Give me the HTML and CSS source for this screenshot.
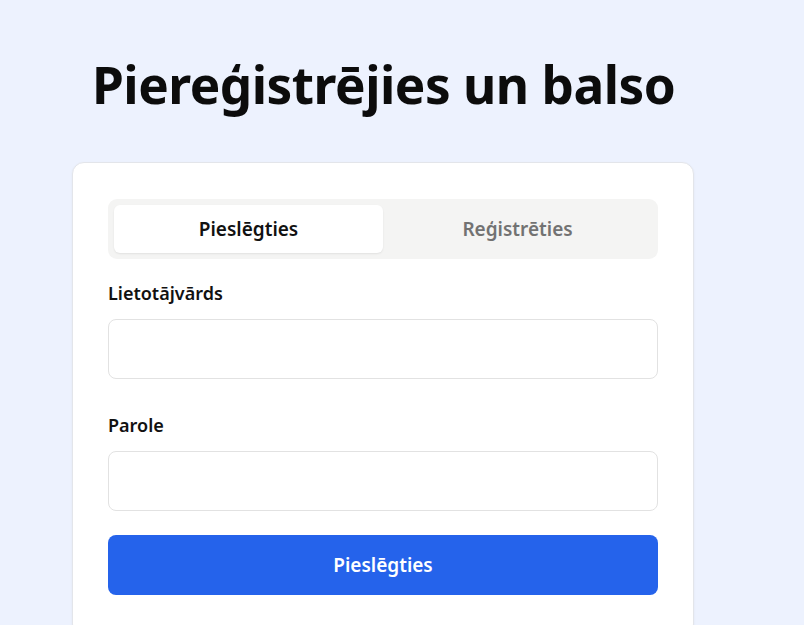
FILE: index.html
```html
<!DOCTYPE html>
<html lang="lv">
<head>
<meta charset="utf-8">
<link rel="stylesheet" href="styles.css">
</head>
<body>
<main class="page">
  <h1 class="title">Piereģistrējies un balso</h1>
  <section class="card">
    <div class="tabs">
      <button class="tab tab-active">Pieslēgties</button>
      <button class="tab">Reģistrēties</button>
    </div>
    <form class="form">
      <div class="field">
        <label class="label" for="user">Lietotājvārds</label>
        <input class="input" id="user" type="text">
      </div>
      <div class="field">
        <label class="label" for="pass">Parole</label>
        <input class="input" id="pass" type="password">
      </div>
      <button class="submit" type="button">Pieslēgties</button>
    </form>
  </section>
</main>
</body>
</html>
```
FILE: styles.css
```css
* { box-sizing: border-box; }
html, body { margin: 0; }
body {
  background: #edf2fe;
  font-family: "Noto Sans", "Open Sans", sans-serif;
  color: #111;
  height: 625px;
  overflow: hidden;
}
.page {
  width: 622px;
  margin-left: 72px;
  padding-top: 51px;
}
.title {
  margin: 0 0 44px 20px;
  font-size: 51.3px;
  line-height: 1.3;
  font-weight: 700;
  letter-spacing: -0.5px;
  color: #0c0c0c;
}
.card {
  background: #fff;
  border: 1px solid #e3e5ea;
  border-radius: 12px;
  padding: 36px 35px 40px;
  box-shadow: 0 1px 3px rgba(0,0,0,0.05);
}
.tabs {
  display: grid;
  grid-template-columns: 1fr 1fr;
  background: #f4f4f3;
  border-radius: 9px;
  padding: 6px;
  height: 60px;
}
.tab {
  border: 0;
  background: transparent;
  font-family: inherit;
  font-size: 19px;
  font-weight: 600;
  color: #727272;
  border-radius: 6px;
  padding: 0;
}
.tab-active {
  background: #fff;
  color: #111;
  box-shadow: 0 1px 2px rgba(0,0,0,0.08);
}
.form {
  display: flex;
  flex-direction: column;
  padding-top: 20px;
}
.field {
  display: flex;
  flex-direction: column;
  gap: 12px;
  margin-bottom: 32px;
}
.field + .field { margin-bottom: 24px; }
.label {
  font-size: 18px;
  font-weight: 600;
  line-height: 28px;
  color: #111;
}
.input {
  height: 60px;
  border: 1px solid #e2e2e2;
  border-radius: 8px;
  background: #fff;
  font-family: inherit;
  font-size: 18px;
  padding: 0 16px;
}
.submit {
  height: 60px;
  border: 0;
  border-radius: 8px;
  background: #2563eb;
  color: #fff;
  font-family: inherit;
  font-size: 19px;
  font-weight: 600;
}
```
